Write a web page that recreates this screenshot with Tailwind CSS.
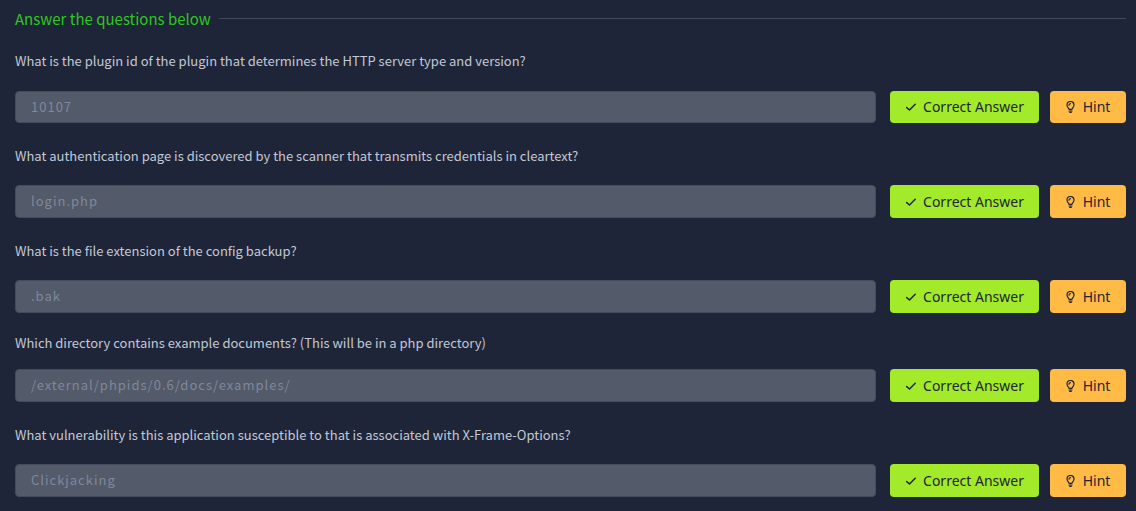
<!DOCTYPE html>
<html lang="en">
<head>
<meta charset="utf-8">
<meta name="viewport" content="width=device-width, initial-scale=1">
<title>Questions</title>
<script src="https://cdn.jsdelivr.net/npm/@tailwindcss/browser@4"></script>
</head>
<body class="min-h-screen bg-[#1e2539] font-['Noto_Sans_CJK_SC','Noto_Sans',sans-serif] text-[13px] text-[#c3c8d4]">
<svg class="hidden" aria-hidden="true">
  <symbol id="check" viewBox="0 0 12 12"><path d="M1.7 6.6 4.5 9 10.2 3.3" fill="none" stroke="currentColor" stroke-width="1.5" stroke-linecap="round" stroke-linejoin="round"/></symbol>
  <symbol id="bulb" viewBox="0 0 9 12"><path d="M3 8.3C3 7.1 1 6.2 1 4a3.5 3.5 0 0 1 7 0C8 6.2 6 7.1 6 8.3ZM3 10h3M3.7 11.3h1.6M3 4.2A1.5 1.5 0 0 1 4.5 2.7" fill="none" stroke="currentColor" stroke-width="1.2" stroke-linecap="round" stroke-linejoin="round"/></symbol>
</svg>
<main class="pr-[10px] pl-[15px] pt-[9px]">
  <div class="flex items-center gap-2">
    <h2 class="text-[15px] leading-5 text-[#2fc61e]">Answer the questions below</h2>
    <hr class="mb-px flex-1 border-[#414859]">
  </div>
  <form>
    <div class="mt-[22px]">
      <label for="q1" class="block leading-5">What is the plugin id of the plugin that determines the HTTP server type and version?</label>
      <div class="mt-5 flex h-8">
        <input id="q1" disabled placeholder="10107" class="min-w-0 flex-1 rounded-sm border border-[#434b5c] bg-[#535a69] px-[15px] pb-px tracking-[1px] placeholder:text-[#7f889c]">
        <button type="button" class="ml-[14px] flex w-[149px] items-center justify-center gap-[6px] rounded-sm bg-[#a3ea2a] font-['Noto_Sans',sans-serif] text-sm text-[#1e2539]"><svg class="size-3"><use href="#check"/></svg>Correct Answer</button>
        <button type="button" class="ml-[11px] flex w-[76px] items-center justify-center gap-2 rounded-sm bg-[#ffbb45] font-['Noto_Sans',sans-serif] text-sm text-[#1e2539]"><svg class="h-3 w-[9px]"><use href="#bulb"/></svg>Hint</button>
      </div>
    </div>
    <div class="mt-[23px]">
      <label for="q2" class="block leading-5">What authentication page is discovered by the scanner that transmits credentials in cleartext?</label>
      <div class="mt-[19px] flex h-[33px]">
        <input id="q2" disabled placeholder="login.php" class="min-w-0 flex-1 rounded-sm border border-[#434b5c] bg-[#535a69] px-[15px] pb-px tracking-[1px] placeholder:text-[#7f889c]">
        <button type="button" class="ml-[14px] flex w-[149px] items-center justify-center gap-[6px] rounded-sm bg-[#a3ea2a] font-['Noto_Sans',sans-serif] text-sm text-[#1e2539]"><svg class="size-3"><use href="#check"/></svg>Correct Answer</button>
        <button type="button" class="ml-[11px] flex w-[76px] items-center justify-center gap-2 rounded-sm bg-[#ffbb45] font-['Noto_Sans',sans-serif] text-sm text-[#1e2539]"><svg class="h-3 w-[9px]"><use href="#bulb"/></svg>Hint</button>
      </div>
    </div>
    <div class="mt-[23px]">
      <label for="q3" class="block leading-5">What is the file extension of the config backup?</label>
      <div class="mt-[19px] flex h-[33px]">
        <input id="q3" disabled placeholder=".bak" class="min-w-0 flex-1 rounded-sm border border-[#434b5c] bg-[#535a69] px-[15px] pb-px tracking-[1px] placeholder:text-[#7f889c]">
        <button type="button" class="ml-[14px] flex w-[149px] items-center justify-center gap-[6px] rounded-sm bg-[#a3ea2a] font-['Noto_Sans',sans-serif] text-sm text-[#1e2539]"><svg class="size-3"><use href="#check"/></svg>Correct Answer</button>
        <button type="button" class="ml-[11px] flex w-[76px] items-center justify-center gap-2 rounded-sm bg-[#ffbb45] font-['Noto_Sans',sans-serif] text-sm text-[#1e2539]"><svg class="h-3 w-[9px]"><use href="#bulb"/></svg>Hint</button>
      </div>
    </div>
    <div class="mt-5">
      <label for="q4" class="block leading-5">Which directory contains example documents? (This will be in a php directory)</label>
      <div class="mt-4 flex h-[33px]">
        <input id="q4" disabled placeholder="/external/phpids/0.6/docs/examples/" class="min-w-0 flex-1 rounded-sm border border-[#434b5c] bg-[#535a69] px-[15px] pb-px tracking-[1px] placeholder:text-[#7f889c]">
        <button type="button" class="ml-[14px] flex w-[149px] items-center justify-center gap-[6px] rounded-sm bg-[#a3ea2a] font-['Noto_Sans',sans-serif] text-sm text-[#1e2539]"><svg class="size-3"><use href="#check"/></svg>Correct Answer</button>
        <button type="button" class="ml-[11px] flex w-[76px] items-center justify-center gap-2 rounded-sm bg-[#ffbb45] font-['Noto_Sans',sans-serif] text-sm text-[#1e2539]"><svg class="h-3 w-[9px]"><use href="#bulb"/></svg>Hint</button>
      </div>
    </div>
    <div class="mt-[23px]">
      <label for="q5" class="block leading-5">What vulnerability is this application susceptible to that is associated with X-Frame-Options?</label>
      <div class="mt-[19px] flex h-[33px]">
        <input id="q5" disabled placeholder="Clickjacking" class="min-w-0 flex-1 rounded-sm border border-[#434b5c] bg-[#535a69] px-[15px] pb-px tracking-[1px] placeholder:text-[#7f889c]">
        <button type="button" class="ml-[14px] flex w-[149px] items-center justify-center gap-[6px] rounded-sm bg-[#a3ea2a] font-['Noto_Sans',sans-serif] text-sm text-[#1e2539]"><svg class="size-3"><use href="#check"/></svg>Correct Answer</button>
        <button type="button" class="ml-[11px] flex w-[76px] items-center justify-center gap-2 rounded-sm bg-[#ffbb45] font-['Noto_Sans',sans-serif] text-sm text-[#1e2539]"><svg class="h-3 w-[9px]"><use href="#bulb"/></svg>Hint</button>
      </div>
    </div>
  </form>
</main>
</body>
</html>
